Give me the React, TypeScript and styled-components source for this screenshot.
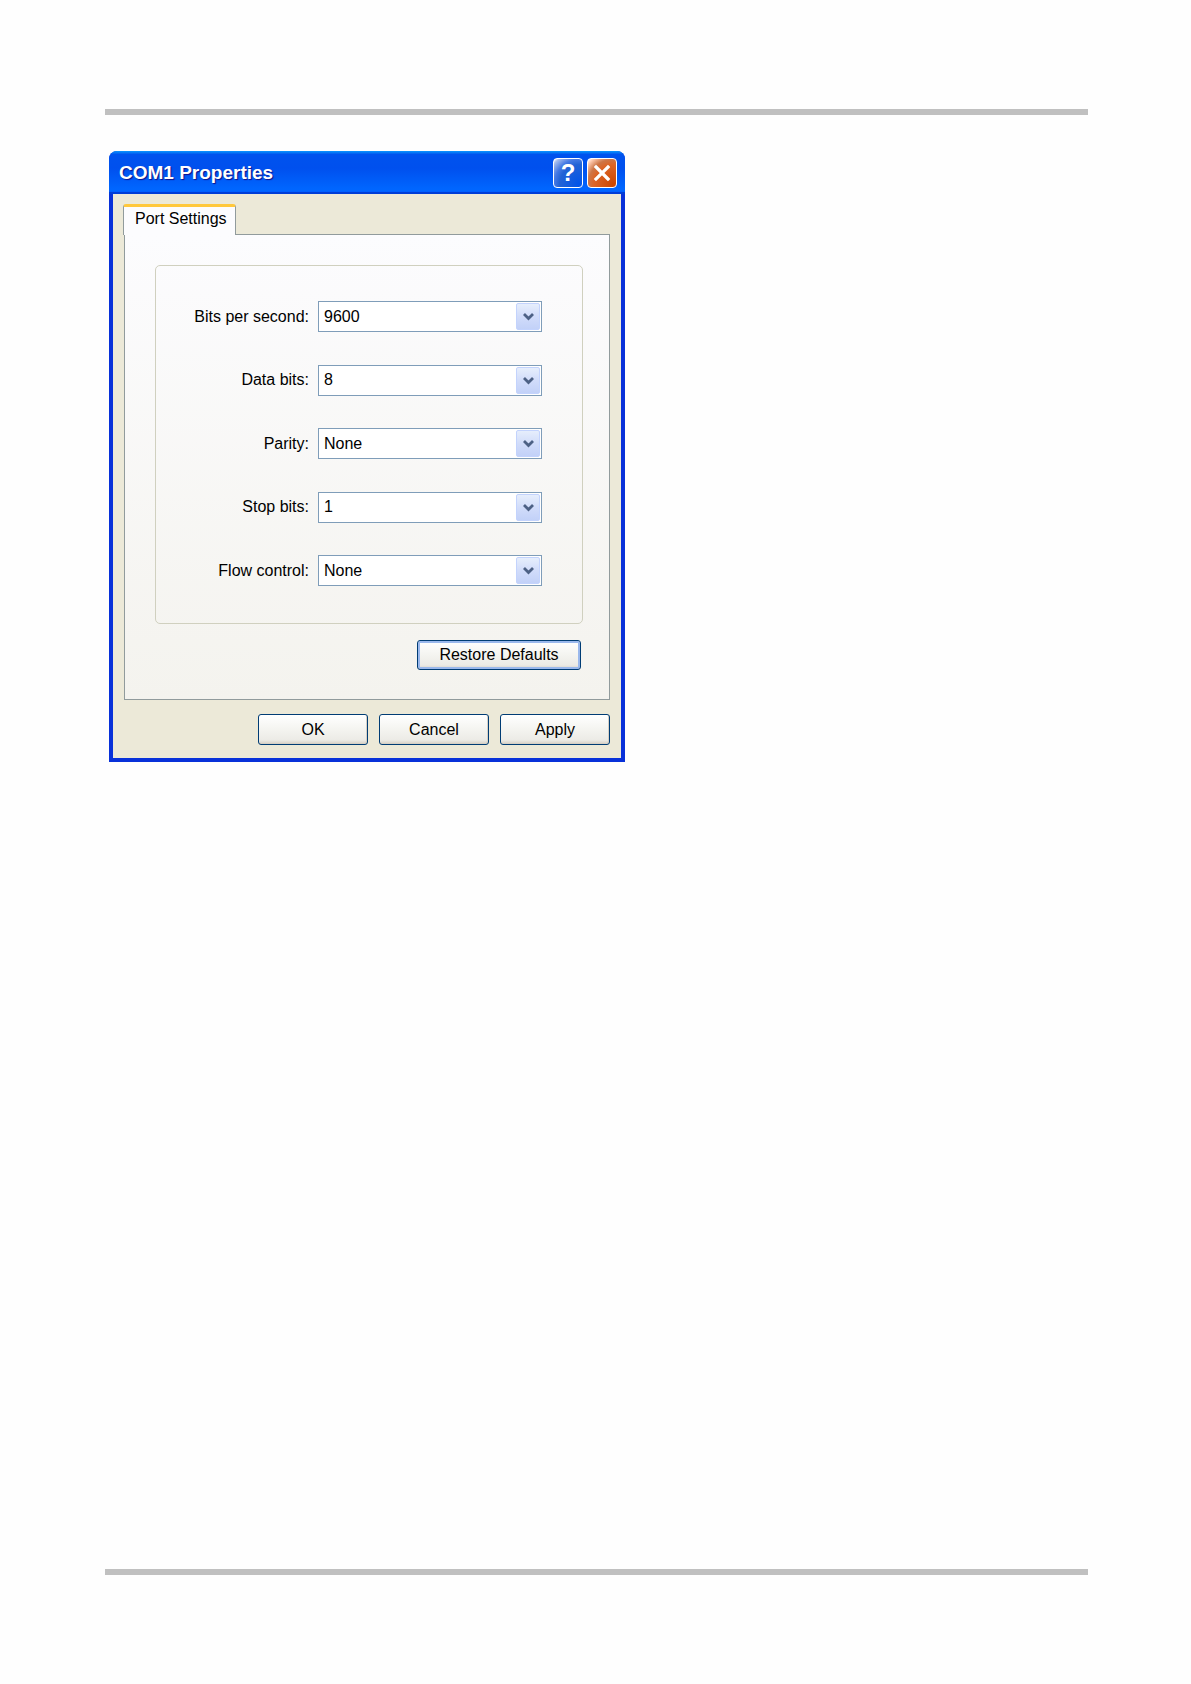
import styled, { createGlobalStyle } from 'styled-components'

const GlobalStyle = createGlobalStyle`
  body {
    margin: 0;
    background: #fefefe;
    font-family: "Liberation Sans", Arial, sans-serif;
  }
`

const Page = styled.div`
  width: 1191px;
  min-height: 1684px;
  box-sizing: border-box;
  padding: 109px 103px 109px 105px;
  display: flex;
  flex-direction: column;
`

const Rule = styled.div`
  height: 6px;
  background: #c0c0c0;
`

const Main = styled.main`
  flex: 1;
  padding: 36px 0 0 4px;
`

const Window = styled.div`
  width: 516px;
  display: flex;
  flex-direction: column;
  border-radius: 8px 8px 0 0;
  overflow: hidden;
  background: #0831d9;
`

const TitleBar = styled.div`
  height: 43px;
  display: flex;
  align-items: center;
  justify-content: space-between;
  padding: 0 8px 0 10px;
  background: linear-gradient(
    180deg,
    #0997ff 0%,
    #0053ee 8%,
    #0050ee 40%,
    #0066ff 88%,
    #0066ff 93%,
    #005bff 95%,
    #003dd7 96%,
    #003dd7 100%
  );
`

const TitleText = styled.span`
  color: #fff;
  font-size: 19px;
  font-weight: bold;
  text-shadow: 1px 1px 1px #0f1089;
`

const TitleButtons = styled.div`
  display: flex;
  gap: 4px;
`

const CaptionButton = styled.div<{ $kind: 'help' | 'close' }>`
  width: 30px;
  height: 30px;
  box-sizing: border-box;
  border: 1px solid #fff;
  border-radius: 4px;
  display: flex;
  align-items: center;
  justify-content: center;
  color: #fff;
  font-size: 24px;
  font-weight: bold;
  background: ${({ $kind }) =>
    $kind === 'close'
      ? 'radial-gradient(circle at 90% 90%, #cc4600 0%, #dc6527 55%, #cd7546 70%, #ffccb2 90%, #fff 100%)'
      : 'radial-gradient(circle at 90% 90%, #0054e9 0%, #2263d5 55%, #4479e4 70%, #a3bbec 90%, #fff 100%)'};
`

const Body = styled.div`
  margin: 0 4px 4px;
  background: #ece9d8;
  padding: 10px 11px 13px 10px;
  display: flex;
  flex-direction: column;
`

const TabStrip = styled.div`
  display: flex;
`

const Tab = styled.div`
  position: relative;
  z-index: 1;
  width: 113px;
  height: 31px;
  margin-bottom: -1px;
  box-sizing: border-box;
  border: 1px solid #919b9c;
  border-top: 3px solid #ffc83c;
  border-bottom: none;
  border-radius: 3px 3px 0 0;
  background: #fcfcfe;
  padding: 3px 0 0 11px;
  font-size: 16px;
  color: #000;
`

const TabPanel = styled.div`
  margin-left: 1px;
  border: 1px solid #919b9c;
  background: linear-gradient(180deg, #fcfcfe 0%, #f4f3ee 100%);
  padding: 30px 26px 29px 30px;
  display: flex;
  flex-direction: column;
`

const GroupBox = styled.div`
  border: 1px solid #d0d0bf;
  border-radius: 5px;
  padding: 35px 40px 37px 0;
  display: flex;
  flex-direction: column;
  gap: 32.5px;
`

const Row = styled.div`
  display: grid;
  grid-template-columns: 1fr 224px;
  column-gap: 9px;
  align-items: center;
`

const Label = styled.label`
  text-align: right;
  font-size: 16px;
  color: #000;
`

const Combo = styled.div`
  height: 31px;
  box-sizing: border-box;
  border: 1px solid #7f9db9;
  background: #fff;
  display: flex;
  align-items: center;
  padding: 0 1px 0 5px;
`

const ComboValue = styled.span`
  flex: 1;
  font-size: 16px;
  color: #000;
`

const ComboArrow = styled.div`
  width: 24px;
  height: 27px;
  box-sizing: border-box;
  border: 1px solid #c3d3fd;
  border-radius: 2px;
  background: linear-gradient(180deg, #e6eefc 0%, #d1dcfa 50%, #c2d1f8 100%);
  display: flex;
  align-items: center;
  justify-content: center;
`

const Button = styled.button<{ $wide?: boolean; $focused?: boolean }>`
  width: ${({ $wide }) => ($wide ? '164px' : '110px')};
  height: ${({ $wide }) => ($wide ? '30px' : '31px')};
  box-sizing: border-box;
  border: 1px solid #003c74;
  border-radius: 3px;
  background: linear-gradient(180deg, #fff 0%, #f4f4f0 50%, #ecebe6 86%, #d6d0c5 100%);
  font-family: "Liberation Sans", Arial, sans-serif;
  font-size: 16px;
  color: #000;
  padding: 0;
  box-shadow: ${({ $focused }) =>
    $focused ? 'inset 0 0 0 2px #9ab8ec' : 'inset -1px -1px 0 #d6d0c5'};
`

const RestoreButton = styled(Button)`
  align-self: flex-end;
  margin: 16px 2px 0 0;
`

const ButtonRow = styled.div`
  display: flex;
  justify-content: flex-end;
  gap: 11px;
  margin-top: 14px;
`

const settings = [
  { label: 'Bits per second:', value: '9600' },
  { label: 'Data bits:', value: '8' },
  { label: 'Parity:', value: 'None' },
  { label: 'Stop bits:', value: '1' },
  { label: 'Flow control:', value: 'None' },
]

function Chevron() {
  return (
    <svg width="13" height="9" viewBox="0 0 13 9">
      <path d="M2 2 L6.5 6.5 L11 2" fill="none" stroke="#4d6185" strokeWidth="2.8" />
    </svg>
  )
}

function CloseGlyph() {
  return (
    <svg width="18" height="18" viewBox="0 0 18 18">
      <path d="M3 3 L15 15 M15 3 L3 15" stroke="#fff" strokeWidth="3.2" strokeLinecap="square" />
    </svg>
  )
}

export default function App() {
  return (
    <>
      <GlobalStyle />
      <Page>
        <Rule />
        <Main>
          <Window>
            <TitleBar>
              <TitleText>COM1 Properties</TitleText>
              <TitleButtons>
                <CaptionButton $kind="help">?</CaptionButton>
                <CaptionButton $kind="close">
                  <CloseGlyph />
                </CaptionButton>
              </TitleButtons>
            </TitleBar>
            <Body>
              <TabStrip>
                <Tab>Port Settings</Tab>
              </TabStrip>
              <TabPanel>
                <GroupBox>
                  {settings.map((s) => (
                    <Row key={s.label}>
                      <Label>{s.label}</Label>
                      <Combo>
                        <ComboValue>{s.value}</ComboValue>
                        <ComboArrow>
                          <Chevron />
                        </ComboArrow>
                      </Combo>
                    </Row>
                  ))}
                </GroupBox>
                <RestoreButton $wide $focused>
                  Restore Defaults
                </RestoreButton>
              </TabPanel>
              <ButtonRow>
                <Button>OK</Button>
                <Button>Cancel</Button>
                <Button>Apply</Button>
              </ButtonRow>
            </Body>
          </Window>
        </Main>
        <Rule />
      </Page>
    </>
  )
}
